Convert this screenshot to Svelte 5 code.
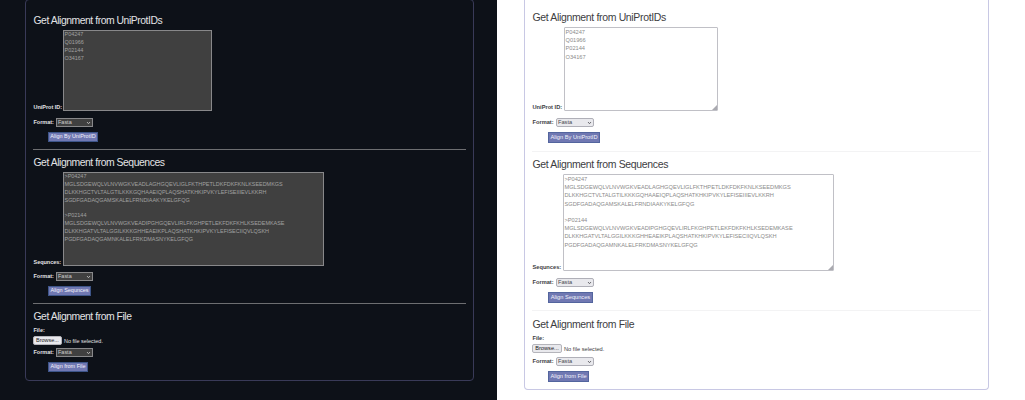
<script>
  const ids = 'P04247\nQ01966\nP02144\nO34167';
  const seqs = [
    '>P04247',
    'MGLSDGEWQLVLNVWGKVEADLAGHGQEVLIGLFKTHPETLDKFDKFKNLKSEEDMKGS',
    'DLKKHGCTVLTALGTILKKKGQHAAEIQPLAQSHATKHKIPVKYLEFISEIIIEVLKKRH',
    'SGDFGADAQGAMSKALELFRNDIAAKYKELGFQG',
    '',
    '>P02144',
    'MGLSDGEWQLVLNVWGKVEADIPGHGQEVLIRLFKGHPETLEKFDKFKHLKSEDEMKASE',
    'DLKKHGATVLTALGGILKKKGHHEAEIKPLAQSHATKHKIPVKYLEFISECIIQVLQSKH',
    'PGDFGADAQGAMNKALELFRKDMASNYKELGFQG'
  ].join('\n');
  const forms = [
    { kind: 'ids', title: 'Get Alignment from UniProtIDs', label: 'UniProt ID:', text: ids, action: 'Align By UniProtID' },
    { kind: 'seqs', title: 'Get Alignment from Sequences', label: 'Sequnces:', text: seqs, action: 'Align Sequnces' },
    { kind: 'file', title: 'Get Alignment from File', label: 'File:', text: '', action: 'Align from File' }
  ];
  const themes = ['dark', 'light'];
</script>

<main>
  {#each themes as theme}
    <div class="page {theme}">
      <div class="panel">
        {#each forms as form}
          <section class={form.kind}>
            <h2>{form.title}</h2>
            {#if form.kind === 'file'}
              <div class="filelabel"><b>{form.label}</b></div>
              <div class="picker">
                <span class="browse">Browse...</span>
                <span class="none">No file selected.</span>
              </div>
            {:else}
              <div class="entry">
                <b>{form.label}</b>
                <div class="area">{form.text}
                  {#if theme === 'light'}
                    <svg class="grip" viewBox="0 0 5 5"><path d="M5 0V5H0Z" /></svg>
                  {/if}
                </div>
              </div>
            {/if}
            <div class="format">
              <b>Format:</b>
              <div class="select">
                <span>Fasta</span>
                <svg viewBox="0 0 5 4"><path d="M1 1L2.5 2.7L4 1" /></svg>
              </div>
            </div>
            <button>{form.action}</button>
          </section>
        {/each}
      </div>
    </div>
  {/each}
</main>

<style>
  :global(body) { margin: 0; background: #fff; }
  main {
    display: flex;
    width: 1025px;
    height: 400px;
    overflow: hidden;
    font-family: "Liberation Sans", Arial, sans-serif;
  }
  .page { height: 400px; box-sizing: border-box; flex: none; font-size: var(--fs); color: var(--fg); }
  .dark {
    --fs: 5.48px; --als: -.02px; --fg: #e3e3e5; --hs: 10.4px; --hls: -.46px; --line: 7.87px;
    --edge: #393a58; --field: #404040; --fieldedge: #88888a; --ph: #a0a0a0;
    --rule: #6d6e71; --selectbg: #404040; --selectedge: #88888a; --selectfg: #cfcfcf;
    --btn: #7078b2; --btnedge: #3d5589; --selw: 37px; --btnh: 10px;
    width: 497px; padding-left: 25px; background: #0d1118;
  }
  .light {
    --fs: 5.68px; --als: -.02px; --fg: #3d3d3f; --hs: 10.5px; --hls: -.35px; --line: 8.18px;
    --edge: #c8c8e4; --field: #fff; --fieldedge: #c0c0c6; --ph: #8c8c8c;
    --rule: #f3f3f4; --selectbg: #e9e9ed; --selectedge: #b0b0b8; --selectfg: #4b4b50;
    --btn: #7078b2; --btnedge: #53659e; --selw: 38px; --btnh: 11px;
    width: 528px; padding-left: 27px; background: #fff;
  }
  .panel { box-sizing: border-box; border: 1px solid var(--edge); }
  .dark .panel { width: 449px; height: 382px; margin-top: -1px; border-radius: 4px; padding: 0 7px; }
  .light .panel { width: 465px; height: 390px; border-top: 0; border-radius: 0 0 4px 4px; padding: 0 7px; }
  section { box-sizing: border-box; display: flex; flex-direction: column; align-items: flex-start; border-bottom: 1px solid var(--rule); }
  section.file { border: 0; }
  h2 { margin: 0; padding-left: .5px; height: 12px; line-height: 13px; font-size: var(--hs); letter-spacing: var(--hls); font-weight: 400; white-space: nowrap; flex: none; }
  b { box-sizing: border-box; padding-left: .5px; font-weight: 700; white-space: nowrap; }
  .entry { display: flex; align-items: flex-end; }
  .entry b { width: 30px; flex: none; line-height: 8px; }
  .light .entry b { width: 31px; }
  .light .ids .entry b { width: 32px; }
  .area {
    position: relative;
    box-sizing: border-box;
    border: 1px solid var(--fieldedge);
    background: var(--field);
    color: var(--ph);
    padding-left: .5px;
    letter-spacing: var(--als);
    line-height: var(--line);
    white-space: pre;
    overflow: hidden;
  }
  .light .area { border-radius: 1px; }
  .grip { position: absolute; right: 0; bottom: 0; width: 5px; height: 5px; fill: #aaaab0; }
  .format { display: flex; align-items: center; height: 9px; margin-top: 7px; }
  .format b { width: 23px; line-height: 9px; }
  .light .format b { width: 24px; }
  .select {
    box-sizing: border-box;
    display: flex;
    align-items: center;
    justify-content: space-between;
    width: var(--selw);
    height: 9px;
    padding: 0 1px;
    border: 1px solid var(--selectedge);
    background: var(--selectbg);
    color: var(--selectfg);
    line-height: 7px;
  }
  .light .select { border-radius: 2px; }
  .select svg { width: 5px; height: 4px; fill: none; stroke: currentColor; stroke-width: .8; }
  button {
    box-sizing: border-box;
    height: var(--btnh);
    margin: 5px 0 0 15px;
    padding: 0 0 1px;
    border: 1px solid var(--btnedge);
    background: var(--btn);
    color: #f2f2fb;
    font: inherit;
    line-height: 7px;
    text-align: center;
    white-space: nowrap;
  }
  .light button { margin-left: 16px; }
  .filelabel { line-height: 8px; height: 8px; }
  .picker { display: flex; align-items: center; height: 9px; gap: 2px; white-space: nowrap; }
  .browse {
    box-sizing: border-box;
    width: 29px;
    height: 9px;
    line-height: 7px;
    text-align: center;
    border: 1px solid #b5b5bb;
    border-radius: 2px;
    background: #e9e9ed;
    color: #18181b;
  }
  .light .browse { width: 30px; }

  .dark .ids { height: 150px; padding-top: 14px; }
  .dark .ids .entry { margin-top: 4px; }
  .dark .ids .area { width: 149px; height: 81px; }
  .dark .ids button { width: 50px; }
  .dark .seqs { height: 154px; padding-top: 6px; }
  .dark .seqs .entry { margin-top: 4px; }
  .dark .seqs .area { width: 261px; height: 94px; }
  .dark .seqs .format { margin-top: 6px; }
  .dark .seqs button { width: 43px; }
  .dark .file { padding-top: 6px; }
  .dark .filelabel { margin-top: 4px; }
  .dark .picker { margin-top: 2px; }
  .dark .file .format { margin-top: 3px; }
  .dark .file button { width: 40px; }

  .light .ids { height: 152px; padding-top: 11px; }
  .light .ids .entry { margin-top: 4px; }
  .light .ids .area { width: 154px; height: 84px; }
  .light .ids button { width: 52px; }
  .light .seqs { height: 159px; padding-top: 6px; }
  .light .seqs .entry { margin-top: 4px; }
  .light .seqs .area { width: 271px; height: 97px; }
  .light .seqs button { width: 45px; }
  .light .file { padding-top: 7px; }
  .light .filelabel { margin-top: 4px; }
  .light .picker { margin-top: 2px; }
  .light .file .format { margin-top: 4px; }
  .light .file button { width: 41px; }
</style>
